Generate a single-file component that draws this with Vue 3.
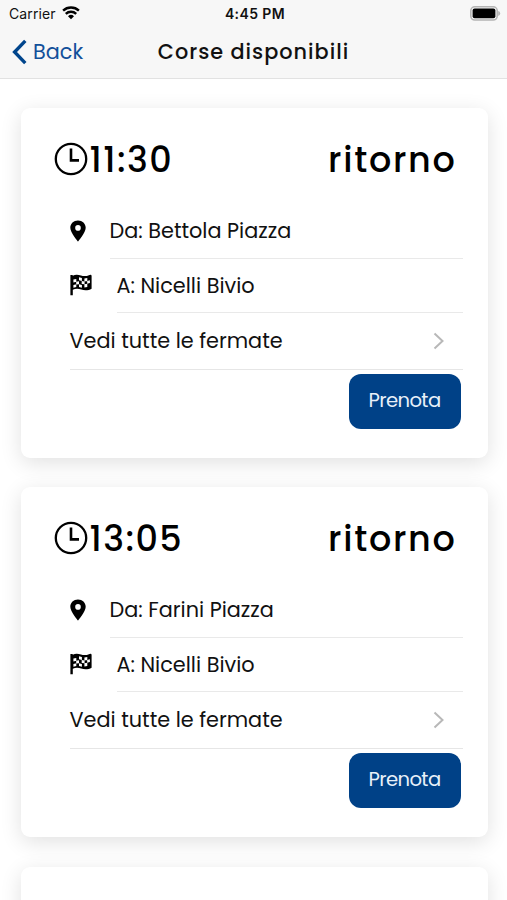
<script setup>
const rides = [
  { time: '11:30', kind: 'ritorno', from: 'Bettola Piazza', to: 'Nicelli Bivio' },
  { time: '13:05', kind: 'ritorno', from: 'Farini Piazza', to: 'Nicelli Bivio' },
]
</script>

<template>
  <div class="screen">
    <header class="header">
      <div class="status">
        <div class="carrier">
          <span>Carrier</span>
          <svg class="wifi" viewBox="0 0 18 14" width="18" height="14">
            <path d="M1.1 4.7 A11.5 11.5 0 0 1 16.9 4.7" />
            <path d="M3.8 7.8 A7.5 7.5 0 0 1 14.2 7.8" />
            <path class="dot" d="M9 13.2 L6 10.3 A4.3 4.3 0 0 1 12 10.3 Z" />
          </svg>
        </div>
        <span class="clock-text">4:45 PM</span>
        <div class="battery-wrap">
          <svg viewBox="0 0 31 15" width="31" height="15">
            <rect x="0.8" y="0.8" width="26.4" height="13.2" rx="4" fill="#f7f7f7" stroke="#b4b4b4" stroke-width="1.6" />
            <rect x="2.6" y="2.5" width="22.8" height="9.8" rx="2" fill="#000" />
            <path d="M28.2 5 Q30.2 5.5 30.2 7.4 Q30.2 9.3 28.2 9.9Z" fill="#b4b4b4" />
          </svg>
        </div>
      </div>
      <div class="toolbar">
        <div class="back">
          <svg viewBox="0 0 16 26" width="16" height="26">
            <path d="M13.3 1.9 L2.6 13 L13.3 24.1" />
          </svg>
          <span>Back</span>
        </div>
        <h1>Corse disponibili</h1>
      </div>
    </header>

    <main class="list">
      <article v-for="ride in rides" :key="ride.time" class="card">
        <div class="card-head">
          <svg class="clock" viewBox="0 0 34 34" width="34" height="34">
            <circle cx="17" cy="17" r="15.2" />
            <path d="M17 6.5 V18.4 H25" />
          </svg>
          <span class="time">{{ ride.time }}</span>
          <span class="kind">{{ ride.kind }}</span>
        </div>
        <div class="rows">
          <div class="row">
            <svg class="pin" viewBox="0 0 16 22" width="16" height="22">
              <path fill-rule="evenodd" d="M8 .4 C3.6 .4 .3 3.6 .3 7.7 C.3 12.7 8 21.5 8 21.5 S15.7 12.7 15.7 7.7 C15.7 3.6 12.4 .4 8 .4Z M8 5.1 A2.8 2.8 0 1 1 8 10.7 A2.8 2.8 0 1 1 8 5.1Z" />
            </svg>
            <div class="row-text from">Da: {{ ride.from }}</div>
          </div>
          <div class="row row-to">
            <svg class="flag" viewBox="0 0 22 22" width="22" height="22">
              <path d="M.4 1 H2.7 V1.8 C5.5 .4 8.3 .8 11 1.6 C14 2.5 16.5 2.2 19.6 .9 Q21.6 .3 21.6 2 V14.8 C18.5 16.5 14.7 16.8 11.3 15.6 C8.3 14.6 5.5 14.5 2.8 15.8 V21.2 H.4Z" />
              <g fill="#fff">
                <path d="M3.4 5.6l2.9-.7v2.9l-2.9.7zM9 3.3l2.9.7v2.9L9 6.2zM14.4 4.5l2.9-.4v2.9l-2.9.4zM6.2 7.7l2.8-.4v2.9l-2.8.3zM11.7 7l2.9.4v2.9l-2.9-.4zM17.2 6.9l2.7-.7v2.8l-2.7.7zM3.4 10.9l2.9-.7v2.9l-2.9.7zM9 10.2l2.9.7v2.9L9 13.1zM14.4 10.3l2.9-.5v3.1l-2.9.6z" />
              </g>
            </svg>
            <div class="row-text to">A: {{ ride.to }}</div>
          </div>
          <div class="stops">
            <span>Vedi tutte le fermate</span>
            <svg viewBox="0 0 12 18" width="12" height="18">
              <path d="M1.5 1.5 L9.5 9 L1.5 16.5" />
            </svg>
          </div>
        </div>
        <button class="book">Prenota</button>
      </article>
      <article class="card"></article>
    </main>
  </div>
</template>

<style>
body {
  margin: 0;
  background: #fff;
  overflow: hidden;
}
</style>

<style scoped>
.screen {
  width: 507px;
  height: 900px;
  overflow: hidden;
  background: #fff;
  color: #111;
  font-family: Poppins, Inter, "Noto Sans", sans-serif;
}
.header {
  box-sizing: border-box;
  height: 79px;
  background: #f7f7f7;
  border-bottom: 1px solid #e2e2e2;
}
.status {
  display: grid;
  grid-template-columns: 1fr auto 1fr;
  align-items: center;
  height: 27px;
  padding: 0 6px 0 9px;
  font-family: Inter, sans-serif;
  font-size: 14px;
}
.carrier {
  display: flex;
  align-items: center;
  gap: 6px;
  letter-spacing: 0.1px;
}
.wifi {
  margin-bottom: 2px;
  fill: none;
  stroke: #000;
  stroke-width: 2.4;
}
.wifi .dot {
  fill: #000;
  stroke: none;
}
.clock-text {
  font-weight: 600;
  letter-spacing: 0.4px;
}
.battery-wrap {
  display: flex;
  justify-content: flex-end;
}
.toolbar {
  display: grid;
  grid-template-columns: 1fr auto 1fr;
  align-items: center;
  height: 50px;
  padding: 0 12px;
}
.back {
  display: flex;
  align-items: center;
  gap: 5px;
  color: #12509a;
  font-size: 20.8px;
}
.back span {
  padding-bottom: 1px;
}
.back svg {
  fill: none;
  stroke: #00458c;
  stroke-width: 3.4;
}
h1 {
  margin: 0;
  padding-bottom: 1px;
  font-size: 20.8px;
  font-weight: 500;
  letter-spacing: 1px;
}
.list {
  display: flex;
  flex-direction: column;
  gap: 29.4px;
  padding: 29px 19.5px 0 20.5px;
}
.card {
  box-sizing: border-box;
  flex: none;
  height: 350px;
  padding: 30px 25px 0 33px;
  border-radius: 9px;
  background: #fff;
  box-shadow: 0 5px 21px rgba(0, 0, 0, 0.12);
  display: flex;
  flex-direction: column;
}
.card-head {
  display: flex;
  align-items: center;
  height: 42px;
  padding-right: 6px;
  color: #000;
  font-size: 35px;
  font-weight: 500;
  letter-spacing: 1.45px;
}
.clock {
  flex: none;
  fill: none;
  stroke: #000;
  stroke-width: 2.3;
}
.clock path {
  stroke-width: 2.6;
}
.time {
  margin-left: 2px;
}
.kind {
  margin-left: auto;
  letter-spacing: 1.7px;
}
.rows {
  padding: 24px 0 0 16px;
  font-size: 20.8px;
}
.row {
  display: flex;
  align-items: center;
  height: 55px;
}
.row-to {
  height: 54px;
}
.row svg {
  flex: none;
}
.row-text {
  box-sizing: border-box;
  flex: 1;
  height: 100%;
  display: flex;
  align-items: center;
  border-bottom: 1px solid #e9e9e9;
}
.row .pin {
  margin-bottom: 1px;
}
.from {
  margin-left: 24px;
  padding-bottom: 1px;
}
.to {
  margin-left: 25px;
  padding-bottom: 1px;
}
.row .flag {
  margin-bottom: 2px;
}
.stops {
  box-sizing: border-box;
  display: flex;
  align-items: center;
  justify-content: space-between;
  height: 57px;
  padding-right: 18px;
  border-bottom: 1px solid #e6e6e6;
}
.stops span {
  padding-bottom: 2px;
}
.stops svg {
  fill: none;
  stroke: #b8b8b8;
  stroke-width: 2;
}
.book {
  align-self: flex-end;
  width: 112px;
  height: 55px;
  margin: 4px 2px 0 0;
  padding: 0 0 3px;
  border: 0;
  border-radius: 12px;
  background: #004187;
  color: #e8f0f9;
  font: inherit;
  font-size: 19.6px;
  letter-spacing: -0.59px;
}
</style>
